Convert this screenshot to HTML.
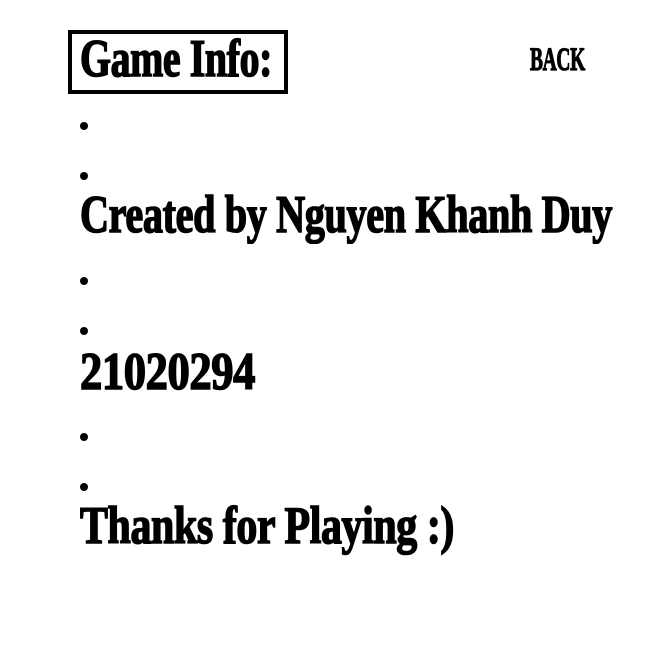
<!DOCTYPE html>
<html><head><meta charset="utf-8"><style>
html,body{margin:0;padding:0;background:#fff;width:650px;height:650px;overflow:hidden}
.t{position:absolute;font-family:"Liberation Serif",serif;font-weight:bold;line-height:1;white-space:nowrap;color:#000;transform-origin:0 0;letter-spacing:-0.5px;-webkit-text-stroke:1.6px #000}
.box{position:absolute;left:68px;top:30px;width:212px;height:56px;border:4px solid #000}
.d{position:absolute;left:80px;width:8px;height:8px;border-radius:50%;background:#000}
</style></head><body>
<div class="box"></div>
<span class="t" data-w="192" style="left:80px;top:33px;font-size:53px">Game Info:</span>
<span class="t" data-w="55" style="left:530px;top:44px;font-size:33px;-webkit-text-stroke:1.2px #000">BACK</span>
<div class="d" style="top:122px"></div>
<div class="d" style="top:172px"></div>
<span class="t" data-w="532" style="left:80px;top:189px;font-size:53px">Created by Nguyen Khanh Duy</span>
<div class="d" style="top:277px"></div>
<div class="d" style="top:327px"></div>
<span class="t" data-w="175" style="left:80px;top:346px;font-size:53px">21020294</span>
<div class="d" style="top:433px"></div>
<div class="d" style="top:483px"></div>
<span class="t" data-w="374" style="left:80px;top:500px;font-size:53px">Thanks for Playing :)</span>
<script>
document.querySelectorAll('.t').forEach(function(e){var w=e.getBoundingClientRect().width;var t=+e.getAttribute('data-w');e.style.transform='scaleX('+(t/w)+')';});
</script>
</body></html>
